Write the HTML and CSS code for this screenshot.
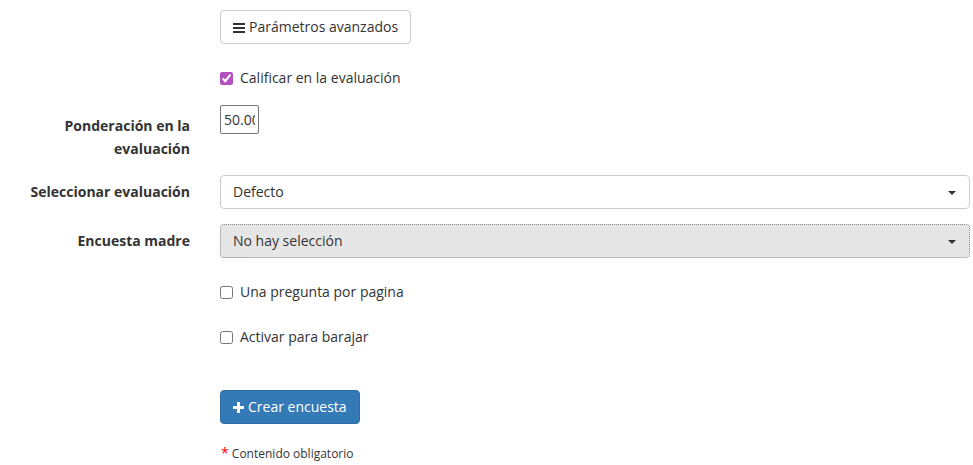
FILE: index.html
```html
<!DOCTYPE html>
<html lang="es">
<head>
<meta charset="utf-8">
<title>Crear encuesta</title>
<link rel="stylesheet" href="styles.css">
</head>
<body>
<form class="form">
  <div class="row row-adv">
    <div class="label"></div>
    <div class="control">
      <button type="button" class="btn btn-default">
        <svg class="ico" width="12" height="11" viewBox="0 0 12 11"><rect x="0" y="1" width="12" height="2"/><rect x="0" y="5" width="12" height="2"/><rect x="0" y="9" width="12" height="2"/></svg><span>Parámetros avanzados</span>
      </button>
    </div>
  </div>

  <div class="row row-check1">
    <div class="label"></div>
    <div class="control">
      <label class="check"><input type="checkbox" checked class="cb cb-purple">Calificar en la evaluación</label>
    </div>
  </div>

  <div class="row row-weight">
    <div class="label label-two">Ponderación en la evaluación</div>
    <div class="control">
      <input type="text" class="small-input" value="50.00">
    </div>
  </div>

  <div class="row row-sel1">
    <div class="label">Seleccionar evaluación</div>
    <div class="control">
      <div class="select">Defecto<span class="caret"></span></div>
    </div>
  </div>

  <div class="row row-sel2">
    <div class="label">Encuesta madre</div>
    <div class="control">
      <div class="select select-focus">No hay selección<span class="caret"></span></div>
    </div>
  </div>

  <div class="row row-check2">
    <div class="label"></div>
    <div class="control">
      <label class="check"><input type="checkbox" class="cb">Una pregunta por pagina</label>
    </div>
  </div>

  <div class="row row-check3">
    <div class="label"></div>
    <div class="control">
      <label class="check"><input type="checkbox" class="cb">Activar para barajar</label>
    </div>
  </div>

  <div class="row row-submit">
    <div class="label"></div>
    <div class="control">
      <button type="button" class="btn btn-primary">
        <svg class="ico" width="11" height="11" viewBox="0 0 11 11"><rect x="4" y="0" width="3" height="11" fill="#fff"/><rect x="0" y="4" width="11" height="3" fill="#fff"/></svg><span>Crear encuesta</span>
      </button>
    </div>
  </div>

  <div class="row row-note">
    <div class="label"></div>
    <div class="control note"><span class="req">*</span> Contenido obligatorio</div>
  </div>
</form>
</body>
</html>
```

FILE: styles.css
```css
* { box-sizing: border-box; }
html, body {
  margin: 0;
  padding: 0;
  background: #fff;
}
body {
  font-family: "Open Sans", "Liberation Sans", sans-serif;
  font-size: 14px;
  line-height: 20px;
  color: #333;
}
.form {
  padding-top: 10px;
  width: 973px;
}
.row {
  display: grid;
  grid-template-columns: 190px 750px;
  column-gap: 30px;
}
.label {
  text-align: right;
  font-weight: 700;
  padding-top: 7px;
}
.label-two {
  line-height: 23px;
  padding-top: 9px;
}
.control { min-width: 0; }

.row-adv { margin-bottom: 17px; }
.row-check1 { margin-bottom: 17px; }
.row-weight { margin-bottom: 15px; }
.row-sel1 { margin-bottom: 15px; }
.row-sel2 { margin-bottom: 17px; }
.row-check2 { margin-bottom: 18px; }
.row-check3 { margin-bottom: 43px; }
.row-submit { margin-bottom: 20px; }

.btn {
  display: inline-flex;
  align-items: center;
  height: 34px;
  padding: 6px 12px;
  font-family: inherit;
  font-size: 14px;
  line-height: 20px;
  white-space: nowrap;
  border-radius: 4px;
  border: 1px solid #ccc;
  background: #fff;
  color: #333;
  cursor: pointer;
}
.btn .ico { margin-right: 4px; flex: none; }
.btn-default .ico { fill: #333; }
.btn-primary {
  background: #337ab7;
  border-color: #2e6da4;
  color: #fff;
}

.check {
  display: flex;
  align-items: center;
  padding-top: 7px;
  min-height: 27px;
  font-weight: 400;
  cursor: pointer;
}
.cb {
  width: 13px;
  height: 13px;
  margin: 0 7px 0 0;
  flex: none;
}
.cb-purple { accent-color: #b450c0; }

.small-input {
  display: block;
  width: 39px;
  height: 29px;
  padding: 1px 3px;
  border: 1px solid #767676;
  border-radius: 2px;
  font-family: inherit;
  font-size: 14px;
  color: #333;
  background: #fff;
}

.select {
  position: relative;
  height: 34px;
  padding: 6px 12px;
  border: 1px solid #ccc;
  border-radius: 4px;
  background: #fff;
  color: #333;
}
.select-focus {
  background: #e6e6e6;
  border: 1px dotted #8c8c8c;
}
.caret {
  position: absolute;
  right: 13px;
  top: 15px;
  width: 0;
  height: 0;
  border-left: 4px solid transparent;
  border-right: 4px solid transparent;
  border-top: 4px solid #333;
}

.note {
  font-size: 12px;
  line-height: 17px;
  padding-left: 1px;
}
.req {
  color: #f00;
  font-size: 14px;
}
```
